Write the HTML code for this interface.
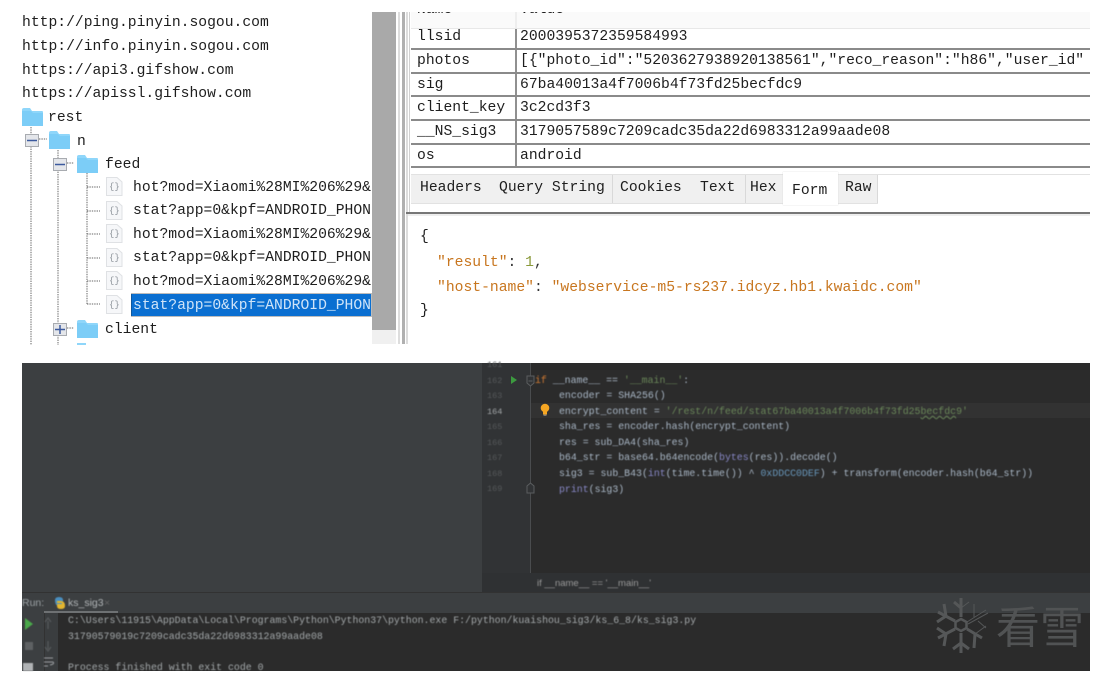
<!DOCTYPE html>
<html><head><meta charset="utf-8"><style>
html,body{margin:0;padding:0;background:#fff}
#p{position:relative;width:1106px;height:678px;overflow:hidden;background:#fff}
.a{position:absolute}
.t{position:absolute;white-space:pre;font-family:"Liberation Mono","Noto Sans CJK SC",monospace;font-size:14.7px;line-height:18px;color:#1e1e1e;filter:blur(.3px)}
.c{position:absolute;white-space:pre;font-family:"Liberation Mono",monospace;font-size:9.88px;line-height:14px;color:#a9b7c6;filter:blur(.4px)}
.n{position:absolute;left:487px;width:20px;white-space:pre;font-family:"Liberation Mono",monospace;font-size:8.5px;line-height:14px;color:#55585a;filter:blur(.4px)}
.h{left:411px;height:1.6px;width:679px;background:#8a8a8a}
.l{top:14px}
</style></head><body><div id="p">

<!-- left tree -->
<div class="t" style="left:22px;top:14px">http://ping.pinyin.sogou.com</div>
<div class="t" style="left:22px;top:38px">http://info.pinyin.sogou.com</div>
<div class="t" style="left:22px;top:62px">https://api3.gifshow.com</div>
<div class="t" style="left:22px;top:85px">https://apissl.gifshow.com</div>
<div class="t" style="left:48px;top:109px">rest</div>
<div class="t" style="left:77px;top:133px">n</div>
<div class="t" style="left:105px;top:156px">feed</div>
<div class="a" style="left:131px;top:294px;width:240px;height:22px;background:#0a6fd1"></div>
<div class="a" style="left:133px;top:170px;width:238px;height:150px;overflow:hidden">
<div class="t" style="left:0;top:9px">hot?mod=Xiaomi%28MI%206%29&amp;</div>
<div class="t" style="left:0;top:32px">stat?app=0&amp;kpf=ANDROID_PHONE</div>
<div class="t" style="left:0;top:56px">hot?mod=Xiaomi%28MI%206%29&amp;</div>
<div class="t" style="left:0;top:79px">stat?app=0&amp;kpf=ANDROID_PHONE</div>
<div class="t" style="left:0;top:103px">hot?mod=Xiaomi%28MI%206%29&amp;</div>
<div class="t" style="left:0;top:127px;color:#cfe4f8">stat?app=0&amp;kpf=ANDROID_PHONE</div>
</div>
<div class="t" style="left:105px;top:321px">client</div>

<svg class="a" style="left:0;top:0" width="372" height="345" viewBox="0 0 372 345">
<defs>
<g id="f"><path d="M0 3 Q0 1 2 1 H8 L10 4 H20 Q21 4 21 5 V19 H0 Z" fill="#8fd6fa"/><path d="M0 4 H9 L11 6 H21 V19 H0 Z" fill="#7ccdf7"/></g>
<g id="d"><path d="M.5 .5 H11 L16 5 V18.500 H.5 Z" fill="#f6f7f9" stroke="#dfe1e4"/><text x="3" y="12" font-family="Liberation Mono" font-size="9" fill="#8f959c">{}</text></g>
</defs>
<use href="#f" x="22" y="107"/><use href="#f" x="49" y="130"/><use href="#f" x="77" y="154"/><use href="#f" x="77" y="319"/>
<rect x="77" y="343" width="9" height="2" fill="#8fd6fa"/>
<g stroke="#666" stroke-dasharray="1.400 1" fill="none">
<path d="M31 127V345M58 150V345M87 173V304M39 139H47M67 163H74M67 328H74"/>
<path d="M87 187H100M87 211H100M87 234H100M87 258H100M87 281H100M87 304H100"/>
</g>
<g fill="#e4e6ea" stroke="#a8abb0">
<rect x="25.500" y="134.500" width="13" height="12"/><rect x="53.500" y="158.500" width="13" height="12"/><rect x="53.500" y="323.500" width="13" height="12"/>
</g>
<path d="M27 140.500H37M55 164.500H65M55 329.500H65M60 325V334" stroke="#3c5a9e" stroke-width="1.500"/>
<use href="#d" x="106" y="177"/><use href="#d" x="106" y="201"/><use href="#d" x="106" y="224"/><use href="#d" x="106" y="248"/><use href="#d" x="106" y="271"/><use href="#d" x="106" y="295"/>
<rect x="131.500" y="293.500" width="240" height="23" fill="none" stroke="#222" stroke-dasharray="1 1" stroke-opacity=".6"/>
</svg>

<!-- scrollbar -->
<div class="a" style="left:372px;top:12px;width:24px;height:318px;background:#a9a9a9"></div>
<div class="a" style="left:372px;top:330px;width:24px;height:14px;background:#f0f0f0"></div>
<div class="a" style="left:398px;top:12px;width:2px;height:332px;background:#ddd"></div>
<div class="a" style="left:402px;top:12px;width:3px;height:332px;background:#b0b0b0"></div>
<div class="a" style="left:406px;top:12px;width:2px;height:332px;background:#dcdcdc"></div>
<div class="a" style="left:409px;top:12px;width:1px;height:200px;background:#d0d0d0"></div>

<!-- table -->
<div class="a" style="left:411px;top:12px;width:679px;height:16px;overflow:hidden;background:#fafafa">
<div class="t" style="left:6px;top:-11px">Name</div><div class="t" style="left:109px;top:-11px">Value</div></div>
<div class="a" style="left:515px;top:12px;width:1.500px;height:16px;background:#eee"></div>
<div class="a" style="left:515px;top:28px;width:1.500px;height:139px;background:#909090"></div>
<div class="a h" style="top:28px;height:1px;background:#e8e8e8"></div>
<div class="a h" style="top:48px"></div><div class="a h" style="top:72px"></div><div class="a h" style="top:95px"></div>
<div class="a h" style="top:119px"></div><div class="a h" style="top:143px"></div><div class="a h" style="top:166px"></div>
<div class="t" style="left:417px;top:28px">llsid</div><div class="t" style="left:520px;top:28px">2000395372359584993</div>
<div class="t" style="left:417px;top:52px">photos</div><div class="t" style="left:520px;top:52px;width:570px;overflow:hidden">[{"photo_id":"5203627938920138561","reco_reason":"h86","user_id"</div>
<div class="t" style="left:417px;top:76px">sig</div><div class="t" style="left:520px;top:76px">67ba40013a4f7006b4f73fd25becfdc9</div>
<div class="t" style="left:417px;top:99px">client_key</div><div class="t" style="left:520px;top:99px">3c2cd3f3</div>
<div class="t" style="left:417px;top:123px">__NS_sig3</div><div class="t" style="left:520px;top:123px">3179057589c7209cadc35da22d6983312a99aade08</div>
<div class="t" style="left:417px;top:147px">os</div><div class="t" style="left:520px;top:147px">android</div>

<!-- tabs -->
<div class="a" style="left:411px;top:174px;width:679px;height:1px;background:#e2e2e2"></div>
<div class="a" style="left:411px;top:175px;width:467px;height:28px;background:#f0f0f0"></div>
<div class="a" style="left:612px;top:175px;width:1px;height:28px;background:#d9d9d9"></div>
<div class="a" style="left:745px;top:175px;width:1px;height:28px;background:#d9d9d9"></div>
<div class="a" style="left:877px;top:175px;width:1px;height:28px;background:#d9d9d9"></div>
<div class="a" style="left:411px;top:203px;width:467px;height:1px;background:#e2e2e2"></div>
<div class="a" style="left:783px;top:172px;width:55px;height:33px;background:#fff;box-shadow:0 0 1px #ccc"></div>
<div class="t" style="left:420px;top:179px">Headers</div>
<div class="t" style="left:499px;top:179px">Query String</div>
<div class="t" style="left:620px;top:179px">Cookies</div>
<div class="t" style="left:700px;top:179px">Text</div>
<div class="t" style="left:750px;top:179px">Hex</div>
<div class="t" style="left:792px;top:182px">Form</div>
<div class="t" style="left:845px;top:179px">Raw</div>
<div class="a" style="left:406px;top:212px;width:684px;height:1.500px;background:#777"></div>
<div class="a" style="left:408px;top:214px;width:682px;height:2px;background:#eee"></div>

<!-- json -->
<div class="t" style="left:420px;top:228px">{</div>
<div class="t" style="left:437px;top:254px;color:#c8761f">"result"<span style="color:#333">: </span><span style="color:#8a9a3a">1</span><span style="color:#333">,</span></div>
<div class="t" style="left:437px;top:279px;color:#c8761f">"host-name"<span style="color:#333">: </span>"webservice-m5-rs237.idcyz.hb1.kwaidc.com"</div>
<div class="t" style="left:420px;top:302px">}</div>

<!-- IDE -->
<div class="a" style="left:22px;top:363px;width:1068px;height:308px;background:#2b2b2b"></div>
<div class="a" style="left:22px;top:363px;width:460px;height:229px;background:#3c3f41"></div>
<div class="a" style="left:482px;top:363px;width:48px;height:210px;background:#313335"></div>
<div class="a" style="left:530px;top:403px;width:560px;height:15px;background:#323232"></div>
<div class="a" style="left:530px;top:363px;width:1px;height:210px;background:#4a4c4e"></div>
<div class="a" style="left:482px;top:573px;width:608px;height:19px;background:#2f3133"></div>

<div class="n" style="top:360px;height:8px;overflow:hidden;line-height:10px">161</div>
<div class="n" style="top:374px">162</div><div class="n" style="top:389px">163</div>
<div class="n" style="top:405px;color:#a4a8aa">164</div>
<div class="n" style="top:420px">165</div><div class="n" style="top:436px">166</div><div class="n" style="top:451px">167</div><div class="n" style="top:467px">168</div><div class="n" style="top:482px">169</div>

<svg class="a" style="left:505px;top:370px;filter:blur(.3px)" width="50" height="130" viewBox="505 370 50 130">
<path d="M511 376 L517 380 L511 384Z" fill="#3c9a3f"/>
<path d="M527 376H534V383L530.500 386L527 383Z" fill="#313335" stroke="#5a5d5f"/>
<path d="M527 493H534V486L530.500 483L527 486Z" fill="#313335" stroke="#5a5d5f"/>
<path d="M528.500 381h4" stroke="#5a5d5f" fill="none"/>
<circle cx="545" cy="408" r="4.300" fill="#f5a623"/><rect x="543" y="411" width="4" height="3.500" fill="#f5a623"/><rect x="543.500" y="414.500" width="3" height="1.500" fill="#777"/>
</svg>

<div class="c" style="left:535px;top:374px"><span style="color:#cc7832">if</span> __name__ == <span style="color:#6a8759">'__main__'</span>:</div>
<div class="c" style="left:559px;top:389px">encoder = SHA256()</div>
<div class="c" style="left:559px;top:405px">encrypt_content = <span style="color:#6a8759">'/rest/n/feed/stat67ba40013a4f7006b4f73fd25<span style="text-decoration:underline;text-decoration-style:wavy;text-decoration-thickness:.5px">becfdc</span>9'</span></div>
<div class="c" style="left:559px;top:420px">sha_res = encoder.hash(encrypt_content)</div>
<div class="c" style="left:559px;top:436px">res = sub_DA4(sha_res)</div>
<div class="c" style="left:559px;top:451px">b64_str = base64.b64encode(<span style="color:#8888c6">bytes</span>(res)).decode()</div>
<div class="c" style="left:559px;top:467px">sig3 = sub_B43(<span style="color:#8888c6">int</span>(time.time()) ^ <span style="color:#6897bb">0xDDCC0DEF</span>) + transform(encoder.hash(b64_str))</div>
<div class="c" style="left:559px;top:483px"><span style="color:#8888c6">print</span>(sig3)</div>
<div class="c" style="left:537px;top:577px;font-family:'Liberation Sans',sans-serif;font-size:9.500px;color:#999">if __name__ == '__main__'</div>

<!-- run bar -->
<div class="a" style="left:22px;top:592px;width:1068px;height:21px;background:#3c3f41;border-top:1px solid #323232;box-sizing:border-box"></div>
<div class="a" style="left:22px;top:613px;width:36px;height:58px;background:#3c3f41"></div>
<div class="a" style="left:44px;top:613px;width:1px;height:58px;background:#323232"></div>
<div class="a" style="left:45px;top:613px;width:13px;height:58px;background:#3a3d3f"></div>
<div class="a" style="left:44px;top:611px;width:74px;height:2px;background:#6e7173"></div>
<div class="c" style="left:22px;top:596px;font-family:'Liberation Sans',sans-serif;font-size:10.500px;color:#9aa0a3">Run:</div>
<div class="c" style="left:68px;top:596px;font-family:'Liberation Sans',sans-serif;font-size:10.500px;color:#b0b4b6">ks_sig3</div>
<div class="c" style="left:104px;top:596px;font-family:'Liberation Sans',sans-serif;font-size:10.500px;color:#666">×</div>
<svg class="a" style="left:22px;top:592px;filter:blur(.4px)" width="50" height="79" viewBox="0 0 50 79">
<path d="M33 8Q33 5 37 5Q41 5 41 8V10H36V11H41V14H37Q33 14 33 8Z" fill="#4a8fc0"/>
<path d="M43 14Q43 17 39 17Q35 17 35 14V12H40V11H35V9H39Q43 9 43 14Z" fill="#e4b62e"/>
<path d="M3 26L11 32L3 38Z" fill="#4aa84a"/>
<rect x="3" y="50" width="8" height="8" fill="#5e6163"/>
<path d="M26 29V37M23 30L26 26L29 30M26 49V57M23 55L26 59L29 55" stroke="#55585a" stroke-width="1.300" fill="none"/>
<path d="M22 66H31M22 70H31Q33 72 28 73M22 74H26" stroke="#9a9da0" fill="none"/>
<rect x="1" y="71" width="10" height="8" fill="#b0b3b5"/>
</svg>
<div class="c" style="left:68px;top:614px;font-size:9.880px;color:#a3a8aa">C:\Users\11915\AppData\Local\Programs\Python\Python37\python.exe F:/python/kuaishou_sig3/ks_6_8/ks_sig3.py</div>
<div class="c" style="left:68px;top:630px;font-size:9.880px;color:#a3a8aa">31790579019c7209cadc35da22d6983312a99aade08</div>
<div class="c" style="left:68px;top:661px;font-size:9.880px;color:#a3a8aa">Process finished with exit code 0</div>

<!-- watermark -->
<svg class="a" style="left:936px;top:596px;filter:blur(.3px)" width="54" height="60" viewBox="0 0 54 60">
<g stroke="#555758" stroke-width="3" fill="none">
<path d="M25 2V21M25 37V57M2 16L19 25M31 33L46 42M2 42L19 33"/>
<path d="M18 6L25 12M17 53L25 47L33 53M8 8L10 20L1 26M1 32L10 38L8 50M38 52L39 38"/>
</g>
<path d="M25 23L30.500 26V32L25 35L19.500 32V26Z" fill="none" stroke="#555758" stroke-width="2.500"/>
<path d="M25 12L33 6M31 26L50 14M32 28L52 17M38 8V21M42 25L50 32M39 38L50 30" stroke="#555758" stroke-width="1" fill="none"/>
</svg>
<div class="a" style="left:996px;top:598px;white-space:pre;font-family:'Noto Sans CJK SC',sans-serif;font-weight:400;font-size:44px;line-height:52px;color:#515354">看雪</div>
</div></body></html>
